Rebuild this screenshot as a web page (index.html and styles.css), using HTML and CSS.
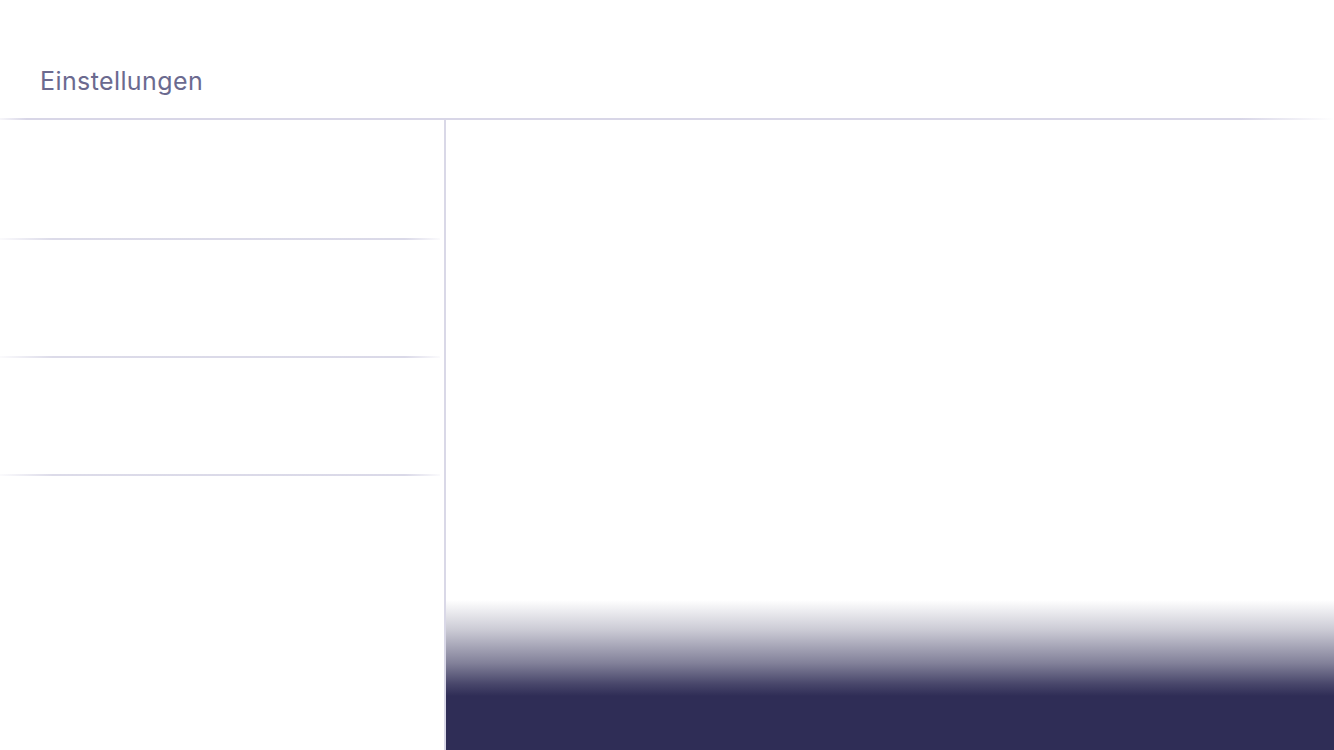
FILE: index.html
```html
<!DOCTYPE html>
<html lang="de">
<head>
<meta charset="utf-8">
<title>Einstellungen</title>
<link rel="stylesheet" href="styles.css">
</head>
<body>
<div class="app">
  <header class="header">
    <h1 class="title">Einstellungen</h1>
  </header>
  <div class="rule"></div>
  <div class="main">
    <nav class="sidebar">
      <div class="item"></div>
      <div class="sep"></div>
      <div class="item"></div>
      <div class="sep"></div>
      <div class="item"></div>
      <div class="sep"></div>
    </nav>
    <section class="content">
      <div class="content-body"></div>
      <div class="fade"></div>
    </section>
  </div>
</div>
</body>
</html>
```
FILE: styles.css
```css
html, body {
  margin: 0;
  padding: 0;
  background: #ffffff;
}
.app {
  width: 1334px;
  height: 750px;
  display: flex;
  flex-direction: column;
  overflow: hidden;
  font-family: Inter, "Liberation Sans", Arial, sans-serif;
}
.header {
  height: 118px;
  padding-left: 40px;
  display: flex;
  align-items: flex-start;
  box-sizing: border-box;
}
.title {
  margin: 63px 0 0 0;
  font-size: 25px;
  letter-spacing: 0.4px;
  font-weight: normal;
  line-height: 36px;
  color: #6b6a8f;
}
.rule {
  height: 2px;
  background: linear-gradient(to right, rgba(214,212,230,0.2) 0%, #d8d6e7 2%, #d8d6e7 93%, rgba(214,212,230,0) 100%);
}
.main {
  flex: 1;
  display: flex;
  min-height: 0;
}
.sidebar {
  width: 444px;
  border-right: 2px solid #d9d8e7;
  padding-top: 2px;
  display: flex;
  flex-direction: column;
}
.item {
  height: 116px;
}
.sep {
  height: 2px;
  margin-right: 4px;
  background: linear-gradient(to right, rgba(214,212,230,0.1) 0%, #dcdbe9 12%, #dad9e8 92%, rgba(214,212,230,0.1) 100%);
}
.content {
  flex: 1;
  display: flex;
  flex-direction: column;
}
.content-body {
  flex: 1;
}
.fade {
  height: 150px;
  background: linear-gradient(to bottom, rgba(47,45,86,0) 0%, rgba(47,45,86,0.25) 20%, rgba(47,45,86,0.6) 42%, rgba(47,45,86,0.88) 56%, #2f2d56 64%, #2f2d56 100%);
}
```
